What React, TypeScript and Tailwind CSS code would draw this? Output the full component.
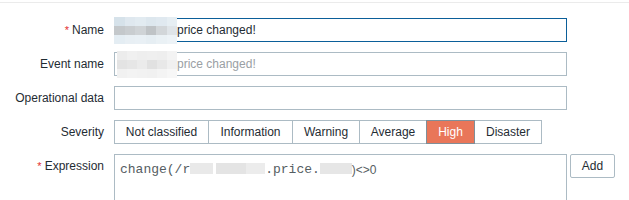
import React from 'react';

const severities = ['Not classified', 'Information', 'Warning', 'Average', 'High', 'Disaster'];
const sevWidths = ['w-[95px]', 'w-[85px]', 'w-[68px]', 'w-[68px]', 'w-[49px]', 'w-[68px]'];

// pixelated blur over hidden text
const Blur: React.FC<{ cells: string[]; className?: string }> = ({ cells, className }) => (
  <div className={`grid grid-cols-6 grid-rows-3 ${className ?? ''}`}>
    {cells.map((c, i) => (
      <div key={i} className={c} />
    ))}
  </div>
);

const nameCells = [
  'bg-[#d6e2ea]', 'bg-[#dfe8ef]', 'bg-[#e2ebf1]', 'bg-[#dde7ee]', 'bg-[#e0e9f0]', 'bg-[#e6eef3]',
  'bg-[#c4c8cb]', 'bg-[#c9cdd0]', 'bg-[#cfd3d6]', 'bg-[#bfc3c6]', 'bg-[#d2d6d9]', 'bg-[#dfe4e8]',
  'bg-[#e4edf3]', 'bg-[#e8eff4]', 'bg-[#e9f0f5]', 'bg-[#e6eef3]', 'bg-[#eaf1f5]', 'bg-[#edf3f7]',
];
const eventCells = [
  'bg-[#ececec]', 'bg-[#f0f0f0]', 'bg-[#eeeeee]', 'bg-[#efefef]', 'bg-[#eeeeee]', 'bg-[#f3f3f3]',
  'bg-[#e3e3e3]', 'bg-[#e6e6e6]', 'bg-[#ebebeb]', 'bg-[#e1e1e1]', 'bg-[#e8e8e8]', 'bg-[#f0f0f0]',
  'bg-[#f1f1f1]', 'bg-[#f3f3f3]', 'bg-[#f2f2f2]', 'bg-[#f1f1f1]', 'bg-[#f4f4f4]', 'bg-[#f7f7f7]',
];

const Label: React.FC<{ text: string; required?: boolean }> = ({ text, required }) => (
  <div className="w-[104px] shrink-0 text-right leading-[24px]">
    {required && <span className="text-[#e32f2f] mr-[3px] text-[11px]">*</span>}
    {text}
  </div>
);

export default function App() {
  return (
    <div
      className="w-[629px] h-[200px] bg-white overflow-hidden text-[12px] text-[#1f2c33]"
      style={{ fontFamily: '"Liberation Sans", Arial, sans-serif' }}
    >
      <div className="h-[2px]" />
      <div className="h-px bg-[#ebebeb]" />
      <div className="flex flex-col gap-[10px] pt-[15px]">
        <div className="flex gap-[10px]">
          <Label text="Name" required />
          <div className="relative w-[453px] h-[24px] border border-[#0b5f99] flex items-center pl-[62px]">
            price changed!
            <Blur cells={nameCells} className="absolute left-[-1px] top-[-2px] w-[63px] h-[27px]" />
          </div>
        </div>
        <div className="flex gap-[10px]">
          <Label text="Event name" />
          <div className="relative w-[453px] h-[24px] border border-[#acbbc4] flex items-center pl-[62px] text-[#9aa0a4]">
            price changed!
            <Blur cells={eventCells} className="absolute left-[2px] top-[-2px] w-[60px] h-[27px]" />
          </div>
        </div>
        <div className="flex gap-[10px]">
          <Label text="Operational data" />
          <div className="w-[453px] h-[24px] border border-[#acbbc4]" />
        </div>
        <div className="flex gap-[10px]">
          <Label text="Severity" />
          <div className="flex h-[24px]">
            {severities.map((s, i) => (
              <div
                key={s}
                className={`${sevWidths[i]} flex items-center justify-center border ${
                  i > 0 ? '-ml-px' : ''
                } ${
                  s === 'High'
                    ? 'bg-[#e97659] border-[#7f8f99] text-white relative'
                    : 'bg-white border-[#acbbc4]'
                }`}
              >
                {s}
              </div>
            ))}
          </div>
        </div>
        <div className="flex gap-[10px]">
          <Label text="Expression" required />
          <div
            className="w-[453px] h-[60px] border border-[#acbbc4] pl-[5px] pt-[5px] text-[13px] text-[#555d62] flex items-start"
            style={{ fontFamily: '"Liberation Mono", "Courier New", monospace' }}
          >
            <span>change(/r</span>
            <span className="mt-[3px] inline-block w-[23px] h-[11px] bg-[#e9e9e9]" />
            <span className="mt-[3px] ml-[3px] inline-block w-[30px] h-[11px] bg-[#e4e4e4]" />
            <span className="mt-[3px] inline-block w-[19px] h-[11px] bg-[#ececec]" />
            <span>.price.</span>
            <span className="mt-[3px] inline-block w-[32px] h-[11px] bg-[#e6e6e6]" />
            <span className="text-[12px] mt-[1px]" style={{ fontFamily: '"Liberation Sans", Arial, sans-serif' }}>
              )&lt;&gt;0
            </span>
          </div>
          <div className="ml-[-7px] w-[45px] h-[24px] border border-[#acbbc4] rounded-[2px] flex items-center justify-center">
            Add
          </div>
        </div>
      </div>
    </div>
  );
}
